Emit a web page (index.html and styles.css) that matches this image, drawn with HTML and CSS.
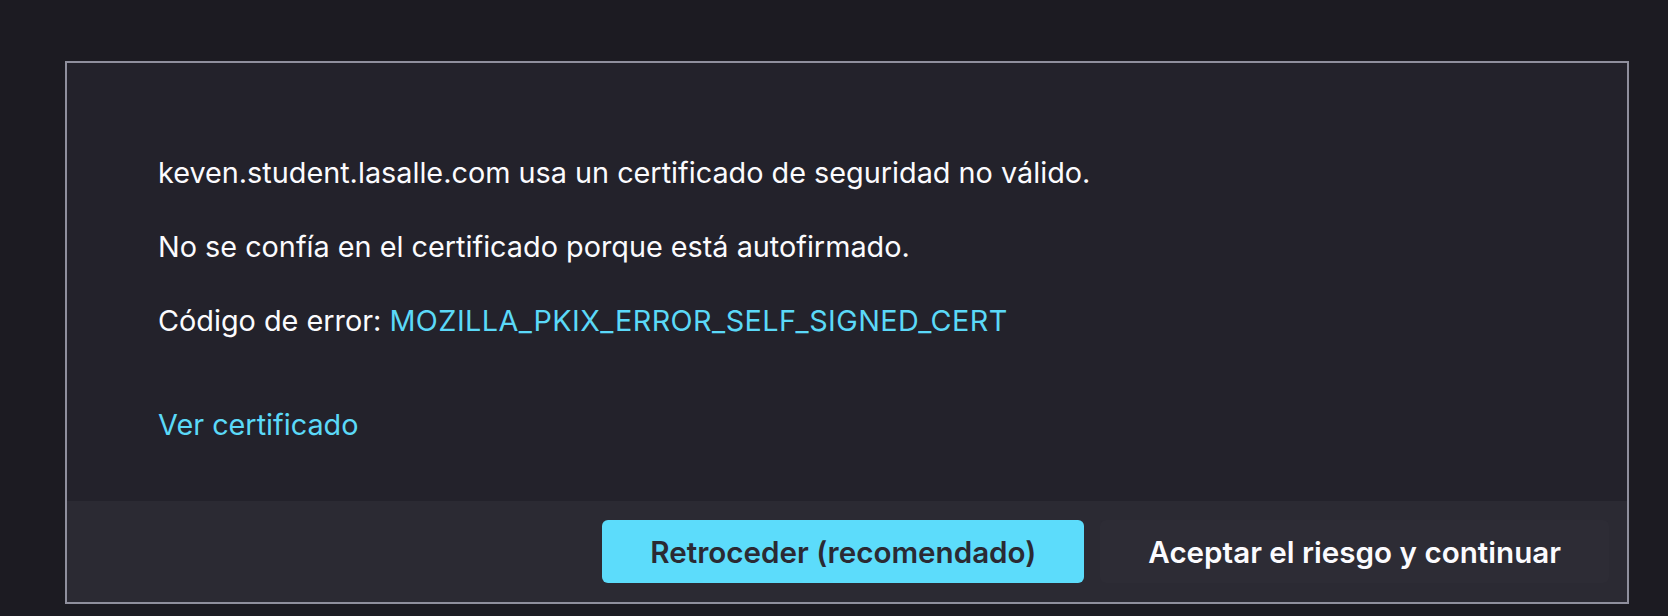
FILE: index.html
```html
<!DOCTYPE html>
<html lang="es">
<head>
<meta charset="utf-8">
<title>Advertencia: riesgo potencial de seguridad</title>
<link rel="stylesheet" href="styles.css">
</head>
<body>
<div class="panel">
  <div class="panel-body">
    <p class="info">keven.student.lasalle.com usa un certificado de seguridad no válido.</p>
    <p class="info">No se confía en el certificado porque está autofirmado.</p>
    <p class="info">Código de error: <a class="code" href="#">MOZILLA_PKIX_ERROR_SELF_SIGNED_CERT</a></p>
    <a class="view-cert" href="#">Ver certificado</a>
  </div>
  <div class="panel-footer">
    <button class="btn btn-primary">Retroceder (recomendado)</button>
    <button class="btn btn-secondary">Aceptar el riesgo y continuar</button>
  </div>
</div>
</body>
</html>
```
FILE: styles.css
```css
html, body {
  height: 100%;
}
body {
  margin: 0;
  background: #1c1b22;
  font-family: Inter, "Noto Sans", sans-serif;
  color: #fbfbfe;
  padding: 61px 39px 0 65px;
  box-sizing: border-box;
}
.panel {
  width: 1564px;
  height: 543px;
  box-sizing: border-box;
  border: 2px solid #8f8f9d;
  background: #23222b;
  display: flex;
  flex-direction: column;
}
.panel-body {
  flex: 1;
  padding: 88px 91px 0;
  font-size: 28.8px;
  line-height: 44px;
}
.info {
  margin: 0 0 30px;
}
.code {
  color: #5bd9f8;
  text-decoration: none;
  letter-spacing: 0.45px;
}
.view-cert {
  display: inline-block;
  margin-top: 30px;
  color: #5bd9f8;
  text-decoration: none;
}
.panel-footer {
  height: 101px;
  box-sizing: border-box;
  background: #2b2a33;
  display: flex;
  justify-content: flex-end;
  align-items: flex-start;
  gap: 16px;
  padding: 19px 18px 0 0;
}
.btn {
  height: 63px;
  padding: 0 48px;
  border: none;
  border-radius: 6px;
  font-family: Inter, "Noto Sans", sans-serif;
  font-size: 29.6px;
  font-weight: 600;
  cursor: pointer;
}
.btn-primary {
  background: #5cdcfb;
  color: #2b2a33;
}
.btn-secondary {
  background: #2d2c35;
  color: #fbfbfe;
}
```
